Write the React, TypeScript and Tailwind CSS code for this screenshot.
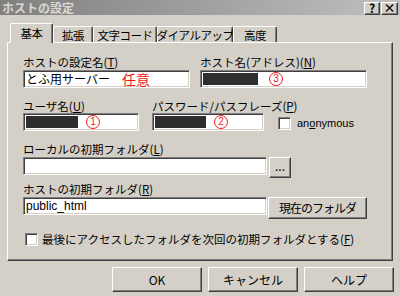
import type { ReactNode } from 'react';

const FONT = "font-['Noto_Sans_CJK_JP',sans-serif]";

const Acc = ({ c }: { c: string }) => (
  <>
    (<span className="underline underline-offset-1">{c}</span>)
  </>
);

const Label = ({ children }: { children: ReactNode }) => (
  <div className="h-[14px] text-[11.5px] leading-[14px] text-black whitespace-nowrap">{children}</div>
);

const Field = ({ w, children }: { w: string; children?: ReactNode }) => (
  <div
    className={`flex items-center h-[18px] bg-white border border-t-[#808080] border-l-[#808080] border-b-white border-r-white shadow-[inset_1px_1px_0_#404040,inset_-1px_-1px_0_#d4d0c8] overflow-hidden p-[2px] ${w}`}
  >
    {children}
  </div>
);

const Btn = ({ className, children }: { className: string; children: ReactNode }) => (
  <div
    className={`flex items-center justify-center bg-[#d4d0c8] border border-t-white border-l-white border-r-[#404040] border-b-[#404040] shadow-[inset_-1px_-1px_0_#808080] text-[12px] text-black whitespace-nowrap ${className}`}
  >
    {children}
  </div>
);

const Check = () => (
  <div className="w-[13px] h-[13px] bg-white border border-t-[#808080] border-l-[#808080] border-b-white border-r-white shadow-[inset_1px_1px_0_#404040,inset_-1px_-1px_0_#d4d0c8] shrink-0" />
);

const Bar = ({ w }: { w: string }) => <div className={`h-[12px] bg-[#2e2e2e] shrink-0 ${w}`} />;

// red annotation number drawn as a circle with the digit inside
const Num = ({ n, className = '' }: { n: string; className?: string }) => (
  <span
    className={`w-[14px] h-[14px] shrink-0 rounded-full border-[1.5px] border-[#f01818] flex items-center justify-center font-['Liberation_Sans',sans-serif] text-[10px] leading-none text-[#f01818] ${className}`}
  >
    {n}
  </span>
);

const Tab = ({ label, w, active }: { label: string; w: string; active?: boolean }) =>
  active ? (
    <div
      className={`relative z-10 -mb-px h-[20px] bg-[#d4d0c8] border-t border-l border-t-white border-l-white border-r border-r-[#404040] shadow-[inset_-1px_0_0_#808080] rounded-t-[2px] flex items-start justify-center pt-[2px] text-[11.5px] leading-[14px] whitespace-nowrap tracking-[-0.5px] ${w}`}
    >
      {label}
    </div>
  ) : (
    <div
      className={`h-[16px] bg-[#d4d0c8] border-t border-l border-t-white border-l-white border-r border-r-[#404040] shadow-[inset_-1px_0_0_#808080] rounded-t-[2px] flex items-center justify-center text-[11.5px] leading-[14px] whitespace-nowrap tracking-[-0.5px] ${w}`}
    >
      {label}
    </div>
  );

export default function App() {
  return (
    <div className={`w-[400px] h-[296px] bg-[#d4d0c8] flex flex-col overflow-hidden text-black ${FONT}`}>
      {/* title bar */}
      <div className="h-[15px] shrink-0 flex items-center justify-between bg-gradient-to-r from-[#808080] to-[#c0c0c0]">
        <span className="pl-[2px] text-[12px] font-bold leading-none text-[#dcd8d0]">ホストの設定</span>
        <div className="flex gap-[1px] pr-[2px] pt-[1px]">
          <Btn className="w-[16px] h-[13px] text-[11px] font-bold leading-none">?</Btn>
          <Btn className="w-[17px] h-[13px] text-[12px] font-bold leading-none">×</Btn>
        </div>
      </div>

      {/* tabs */}
      <div className="mt-[8px] h-[19px] shrink-0 flex items-end pl-[10px]">
        <Tab label="基本" w="w-[43px]" active />
        <Tab label="拡張" w="w-[40px]" />
        <Tab label="文字コード" w="w-[64px]" />
        <Tab label="ダイアルアップ" w="w-[76px]" />
        <Tab label="高度" w="w-[44px]" />
      </div>

      {/* panel */}
      <div className="ml-[7px] w-[386px] h-[219px] shrink-0 border border-t-white border-l-white border-r-[#404040] border-b-[#404040] shadow-[inset_-1px_-1px_0_#808080] pl-[15px]">
        <div className="mt-[12px] flex gap-[10px]">
          <div className="w-[167px] flex flex-col gap-[1px]">
            <Label>
              ホストの設定名<Acc c="T" />
            </Label>
            <Field w="w-[167px]">
              <span className="text-[12px] leading-none whitespace-nowrap">とふ用サーバー</span>
              <span className="ml-[12px] text-[#f01818] text-[14px] leading-[12px]">任意</span>
            </Field>
          </div>
          <div className="w-[167px] flex flex-col gap-[1px]">
            <Label>
              ホスト名(アドレス)<Acc c="N" />
            </Label>
            <Field w="w-[167px]">
              <Bar w="w-[55px]" />
              <Num n="3" className="ml-[11px]" />
            </Field>
          </div>
        </div>

        <div className="mt-[11px] flex items-end">
          <div className="w-[116px] flex flex-col">
            <Label>
              ユーザ名<Acc c="U" />
            </Label>
            <Field w="w-[116px]">
              <Bar w="w-[52px]" />
              <Num n="1" className="ml-[8px]" />
            </Field>
          </div>
          <div className="ml-[13px] w-[112px] flex flex-col">
            <Label>
              パスワード/パスフレーズ<Acc c="P" />
            </Label>
            <Field w="w-[112px]">
              <Bar w="w-[51px]" />
              <Num n="2" className="ml-[8px]" />
            </Field>
          </div>
          <div className="ml-[14px] mb-[1px] flex items-center gap-[6px]">
            <Check />
            <span className="font-['Liberation_Sans',sans-serif] text-[11px] leading-none">
              an<span className="underline">o</span>nymous
            </span>
          </div>
        </div>

        <div className="mt-[11px]">
          <Label>
            ローカルの初期フォルダ<Acc c="L" />
          </Label>
          <div className="flex items-start gap-[2px] mt-[1px]">
            <Field w="w-[244px]" />
            <Btn className="w-[22px] h-[21px] text-[11px] leading-none pb-[4px]">...</Btn>
          </div>
        </div>

        <div className="mt-[4px]">
          <Label>
            ホストの初期フォルダ<Acc c="R" />
          </Label>
          <div className="flex items-start gap-[1px] mt-[1px]">
            <Field w="w-[244px]">
              <span className="font-['Liberation_Sans',sans-serif] text-[12px] leading-none">public_html</span>
            </Field>
            <Btn className="w-[99px] h-[22px] tracking-[-1px]">現在のフォルダ</Btn>
          </div>
        </div>

        <div className="mt-[13px] pl-[2px] flex items-center gap-[4px]">
          <Check />
          <span className="text-[11.5px] leading-[14px] whitespace-nowrap">
            最後にアクセスしたフォルダを次回の初期フォルダとする<Acc c="F" />
          </span>
        </div>
      </div>

      {/* footer buttons */}
      <div className="mt-[6px] flex justify-end gap-[6px] pr-[6px]">
        <Btn className="w-[90px] h-[25px]">OK</Btn>
        <Btn className="w-[90px] h-[25px]">キャンセル</Btn>
        <Btn className="w-[90px] h-[25px]">ヘルプ</Btn>
      </div>
    </div>
  );
}
